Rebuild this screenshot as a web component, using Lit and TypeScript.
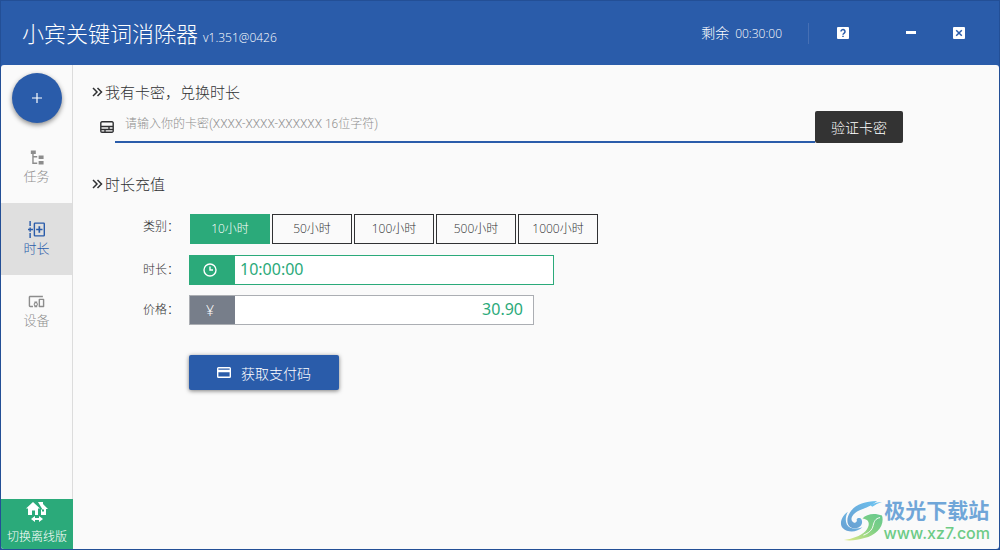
import { LitElement, html, css, svg } from "lit";
import { customElement, state } from "lit/decorators.js";
import { classMap } from "lit/directives/class-map.js";

const icon = (body: unknown, cls = "icon", box = "0 0 24 24") =>
  html`<svg class=${cls} viewBox=${box} fill="currentColor" aria-hidden="true">${body}</svg>`;

const glyphs = {
  tree: svg`<path d="M4 2h7v5H8v3h5v2H8v7h5v2H6V7H4zM15 9h7v5h-7zM15 17h7v5h-7z"/>`,
  hours: svg`<path d="M2 0h2v7H2zM2 9h2v2h3v2H4v2H2v-2H0v-2h2zM2 17h2v7H2z"/><path fill-rule="evenodd" d="M10 2h12a2 2 0 0 1 2 2v16a2 2 0 0 1-2 2H10a2 2 0 0 1-2-2V4a2 2 0 0 1 2-2zm0 2v16h12V4zm4.800 3.500h2.400v3.300h3.300v2.400h-3.300v3.300h-2.400v-3.300h-3.300v-2.400h3.300z"/>`,
  devices: svg`<path d="M3 6h18V4H3c-1.100 0-2 .9-2 2v12c0 1.100.9 2 2 2h4v-2H3V6zm10 6H9v1.780c-.61.550-1 1.330-1 2.220s.39 1.670 1 2.220V20h4v-1.780c.61-.55 1-1.340 1-2.220s-.39-1.670-1-2.220V12zm-2 5.500c-.83 0-1.500-.67-1.500-1.500s.67-1.500 1.500-1.500 1.500.67 1.500 1.500-.67 1.500-1.500 1.500zM22 8h-6c-.5 0-1 .5-1 1v10c0 .5.5 1 1 1h6c.5 0 1-.5 1-1V9c0-.5-.5-1-1-1zm-1 10h-4v-8h4v8z"/>`,
  homes: svg`<path fill-rule="evenodd" d="M8 2 1 8.500h2V15h4v-4.500h3V15h3V8.500h2zM13 2h5v2l5 5h-2v6h-5V9.500h1.500zM17 9.500h2v2h-2z"/><path d="m6 19 4-3v2h4v-2l4 3-4 3v-2h-4v2z"/>`,
  chevrons: svg`<path d="m1 1 4 4L1 9M5.500 1l4 4-4 4" fill="none" stroke="currentColor" stroke-width="1.500"/>`,
  key: svg`<path fill="none" stroke="currentColor" stroke-width="1.400" d="M2 .8h10a1.200 1.200 0 0 1 1.200 1.200v8a1.200 1.200 0 0 1-1.200 1.200H2A1.200 1.200 0 0 1 .8 10V2A1.200 1.200 0 0 1 2 .8zM1 5.500h12M1 8.500h12M5 8.500V11M9 5.500v3"/>`,
  clock: svg`<circle cx="7" cy="7" r="6" fill="none" stroke="currentColor" stroke-width="1.400"/><path d="M7 3.500V7h3" fill="none" stroke="currentColor" stroke-width="1.400"/>`,
  card: svg`<path fill-rule="evenodd" d="M1.500 0h11A1.500 1.500 0 0 1 14 1.500v8a1.500 1.500 0 0 1-1.500 1.500h-11A1.500 1.500 0 0 1 0 9.500v-8A1.500 1.500 0 0 1 1.500 0zm-.1 1.500v1.300h11.200V1.500zm0 3.700v4.400h11.200V5.200z"/>`,
  plus: svg`<path d="M5 0v10M0 5h10" fill="none" stroke="currentColor" stroke-width="1.200"/>`,
  help: svg`<rect width="12" height="12" rx="1"/><path class="cut" d="M4 4.500a2 2 0 1 1 3.200 1.600C6.400 6.700 6 7 6 7.800M6 8.700V10"/>`,
  minimize: svg`<path d="M1 4h10v3H1z"/>`,
  close: svg`<rect width="12" height="12" rx="1"/><path class="cut" d="m3.200 3.200 5.600 5.600M8.800 3.200 3.200 8.800"/>`,
};

@customElement("site-badge")
export class SiteBadge extends LitElement {
  static styles = css`
    :host { display: flex; align-items: center; gap: 1px; }
    .swirl { width: 43px; height: 41px; }
    .words { display: flex; flex-direction: column; align-items: center; }
    .name { font: 700 21px/25px "Liberation Sans", "Noto Sans CJK SC", sans-serif; color: #70a6d8; }
    .site { font: 500 16px/20px Inter, "Liberation Sans", sans-serif; color: #6dcb86; }
  `;
  render() {
    return html`
      <svg class="swirl" viewBox="0 0 44 42" aria-hidden="true">
        <defs>
          <linearGradient id="b" x1="0" y1="1" x2="1" y2="0"><stop offset="0" stop-color="#6a9fd0"/><stop offset="1" stop-color="#6cc0ee"/></linearGradient>
          <linearGradient id="g" x1="0" y1="1" x2="1" y2="0"><stop offset="0" stop-color="#e2ea86"/><stop offset=".6" stop-color="#7dcf84"/><stop offset="1" stop-color="#67c990"/></linearGradient>
        </defs>
        <path fill="url(#b)" d="M38 1C24 1 14 6 10 13c-5 8-2 16 5 16 6 0 9-5 7-9-1-2-4-2-5 0 1 2-1 4-3 3-5-3-1-9 5-12C26 8 31 7 38 1z"/>
        <path fill="url(#b)" d="M8 12C1 17-1 25 3 29c5 5 15 4 20-1-6 2-13 2-16-3-2-4-1-9 1-13z"/>
        <path fill="#6cc0ee" d="M31 5c4-2 8-3 12-3-4 1-7 3-10 5z"/>
        <path fill="url(#g)" d="M23 19c4-5 13-6 20-3 3 10-5 20-18 23-7 2-14 3-21 2 8-1 17-4 22-9 5-6 5-12-3-13z"/>
        <path fill="none" stroke="#fafafa" stroke-width="1" d="M41 18c-5 1-6 4-7 8-1 5-5 8-10 10"/>
      </svg>
      <div class="words"><span class="name">极光下载站</span><span class="site">www.xz7.com</span></div>`;
  }
}

@customElement("app-root")
export class AppRoot extends LitElement {
  static styles = css`
    :host {
      --blue: #2a5caa; --green: #2baa7a; --ink: #303133;
      display: block; min-height: 100vh; color: var(--ink);
      font-family: "Open Sans", "Noto Sans CJK SC", sans-serif; font-weight: 300; font-size: 12px;
    }
    *, *::before { box-sizing: border-box; }
    button { font: inherit; color: inherit; background: none; border: 0; padding: 0; margin: 0; cursor: pointer; }
    svg { display: block; flex: none; }
    h1, h2, p { margin: 0; font-weight: 300; }
    .window { min-height: 100vh; display: flex; flex-direction: column; border: 1px solid #234f96; background: var(--blue); }
    .bar { height: 64px; flex: none; display: flex; align-items: center; color: #fff; padding: 0 34px 0 21px; }
    .brand { flex: 1; display: flex; align-items: baseline; gap: 5px; }
    .title { font-size: 22px; line-height: 30px; }
    .left { display: flex; align-items: baseline; gap: 6px; font-size: 14px; padding-right: 26px; border-right: 1px solid #466fb4; line-height: 20px; }
    .clock { font-size: 12px; }
    .tools { display: flex; align-items: center; }
    .tool { width: 12px; height: 12px; }
    .help { margin-left: 28px; }
    .min { margin-left: 56px; }
    .close { margin-left: 36px; }
    .cut { fill: none; stroke: var(--blue); stroke-width: 1.5px; }
    .body { flex: 1; display: flex; background: #fafafa; border-radius: 3px; overflow: hidden; }
    .side { width: 72px; flex: none; display: flex; flex-direction: column; border-right: 1px solid #dcdcdc; }
    .add { width: 50px; height: 50px; margin: 8px auto; border-radius: 50%; background: var(--blue); color: #fff; display: grid; place-items: center; box-shadow: 0 2px 5px rgba(0, 0, 0, .45); }
    .plus { width: 10px; height: 10px; }
    .nav { display: flex; flex-direction: column; flex: 1; }
    .item { height: 72px; display: flex; flex-direction: column; align-items: center; padding-top: 18px; gap: 1px; font-size: 13px; line-height: 18px; color: #8c8c8c; text-decoration: none; }
    .item.on { background: #dfdfdf; color: var(--blue); }
    .icon { width: 17px; height: 17px; }
    .offline { height: 50px; margin-right: -1px; background: var(--green); color: #fff; display: flex; flex-direction: column; align-items: center; gap: 4px; padding-top: 1px; line-height: 18px; white-space: nowrap; }
    .homes { width: 24px; height: 24px; }
    .main { flex: 1; min-width: 0; display: flex; flex-direction: column; padding: 16px 9px 6px 19px; }
    .head { display: flex; align-items: center; gap: 2px; font-size: 15px; line-height: 22px; }
    .chev { width: 11px; height: 10px; }
    .redeem { display: flex; align-items: flex-start; margin: 8px 87px 30px 8px; }
    .lab { padding: 10px 1px 0 0; }
    .key { width: 14px; height: 12px; }
    .code { flex: 1; min-width: 0; height: 32px; border: 0; border-bottom: 2px solid var(--blue); background: none; outline: 0; padding: 0 10px 4px; font: inherit; font-family: Roboto, "Noto Sans CJK SC", sans-serif; color: var(--ink); }
    .code::placeholder { color: #8f8f8f; opacity: 1; }
    .verify { width: 88px; height: 32px; border-radius: 2px; background: #333; color: #fff; font-size: 14px; }
    .form { display: grid; grid-template-columns: 46px 1fr; row-gap: 10px; margin: 19px 0 0 51px; }
    .label { line-height: 30px; }
    .kind { line-height: 26px; }
    .types { display: flex; gap: 2px; padding: 0 0 1px 1px; }
    .type { width: 80px; height: 30px; border: 1px solid #303133; padding-bottom: 2px; }
    .type.on { background: var(--green); border-color: var(--green); color: #fff; }
    .field { display: flex; height: 30px; border: 1px solid #abaeb3; background: #fff; width: 345px; }
    .field.time { border-color: var(--green); width: 365px; }
    .tag { width: 45px; display: grid; place-items: center; background: #777e8a; color: #fff; font-size: 14px; padding-right: 5px; }
    .time .tag { background: var(--green); }
    .dial { width: 14px; height: 14px; }
    .value { flex: 1; min-width: 0; border: 0; outline: 0; background: none; color: var(--green); font: 400 16px "Noto Sans", sans-serif; padding: 0 5px 2px; }
    .price .value { text-align: right; padding-right: 10px; }
    .pay { width: 150px; height: 35px; margin: 30px 0 0 97px; border-radius: 2px; background: var(--blue); color: #fff; font-size: 14px; display: flex; align-items: center; justify-content: center; gap: 10px; box-shadow: 0 1px 4px rgba(0, 0, 0, .5); }
    .card { width: 14px; height: 11px; }
    .badge { margin-top: auto; align-self: flex-end; }
  `;

  @state() private hours = 10;
  @state() private page = "时长";

  private nav = [
    { name: "任务", glyph: glyphs.tree },
    { name: "时长", glyph: glyphs.hours },
    { name: "设备", glyph: glyphs.devices },
  ];

  private go(e: Event, name: string) {
    e.preventDefault();
    this.page = name;
  }

  render() {
    return html`
      <div class="window">
        <header class="bar">
          <div class="brand"><h1 class="title">小宾关键词消除器</h1><span>v1.351@0426</span></div>
          <p class="left">剩余 <span class="clock">00:30:00</span></p>
          <div class="tools">
            <button class="help" aria-label="帮助">${icon(glyphs.help, "tool", "0 0 12 12")}</button>
            <button class="min" aria-label="最小化">${icon(glyphs.minimize, "tool", "0 0 12 12")}</button>
            <button class="close" aria-label="关闭">${icon(glyphs.close, "tool", "0 0 12 12")}</button>
          </div>
        </header>
        <div class="body">
          <aside class="side">
            <button class="add" aria-label="添加">${icon(glyphs.plus, "plus", "0 0 10 10")}</button>
            <nav class="nav">
              ${this.nav.map((n) => html`<a href="#" class=${classMap({ item: true, on: n.name === this.page })}
                @click=${(e: Event) => this.go(e, n.name)}>${icon(n.glyph)}<span>${n.name}</span></a>`)}
            </nav>
            <button class="offline">${icon(glyphs.homes, "homes")}<span>切换离线版</span></button>
          </aside>
          <main class="main">
            <h2 class="head">${icon(glyphs.chevrons, "chev", "0 0 11 10")}我有卡密，兑换时长</h2>
            <div class="redeem">
              <label class="lab" for="code" aria-label="卡密">${icon(glyphs.key, "key", "0 0 14 12")}</label>
              <input class="code" id="code" placeholder="请输入你的卡密(XXXX-XXXX-XXXXXX 16位字符)" />
              <button class="verify">验证卡密</button>
            </div>
            <h2 class="head">${icon(glyphs.chevrons, "chev", "0 0 11 10")}时长充值</h2>
            <div class="form">
              <span class="kind" id="kind">类别：</span>
              <div class="types" role="group" aria-labelledby="kind">
                ${[10, 50, 100, 500, 1000].map((h) => html`<button class=${classMap({ type: true, on: h === this.hours })}
                  @click=${() => (this.hours = h)}>${h}小时</button>`)}
              </div>
              <label class="label" for="time">时长：</label>
              <div class="field time"><span class="tag">${icon(glyphs.clock, "dial", "0 0 14 14")}</span><input class="value" id="time" readonly .value=${`${this.hours}:00:00`} /></div>
              <label class="label" for="price">价格：</label>
              <div class="field price"><span class="tag">¥</span><input class="value" id="price" readonly .value=${(this.hours * 3.09).toFixed(2)} /></div>
            </div>
            <button class="pay">${icon(glyphs.card, "card", "0 0 14 11")}<span>获取支付码</span></button>
            <site-badge class="badge"></site-badge>
          </main>
        </div>
      </div>`;
  }
}
